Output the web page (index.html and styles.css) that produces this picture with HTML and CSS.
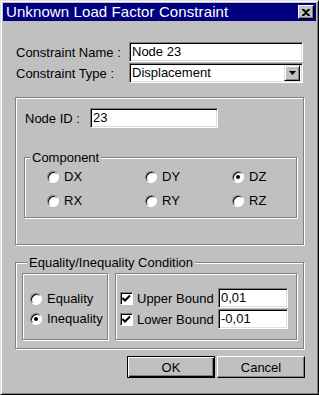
FILE: index.html
```html
<!DOCTYPE html>
<html>
<head>
<meta charset="utf-8">
<link rel="stylesheet" href="styles.css">
</head>
<body>
<div class="window">
  <div class="titlebar">
    <span class="title">Unknown Load Factor Constraint</span>
    <span class="close"><svg width="8" height="7" viewBox="0 0 8 7"><path d="M0 0h2l2 2 2-2h2v1L5 3.5 8 6v1H6L4 5 2 7H0V6l3-2.5L0 1z" fill="#000"/></svg></span>
  </div>
  <div class="content">
    <div class="row r1">
      <span class="label">Constraint Name :</span>
      <span class="input wide">Node 23</span>
    </div>
    <div class="row r2">
      <span class="label">Constraint Type :</span>
      <span class="input wide select">Displacement<span class="dd"><svg width="7" height="4" viewBox="0 0 7 4"><path d="M0 0h7L3.5 4z" fill="#000"/></svg></span></span>
    </div>

    <div class="group g1">
      <div class="row nodeid">
        <span class="label short">Node ID :</span>
        <span class="input nid">23</span>
      </div>
      <div class="group comp">
        <span class="legend">Component</span>
        <div class="grid">
          <span class="opt"><span class="radio"></span>DX</span>
          <span class="opt"><span class="radio"></span>DY</span>
          <span class="opt"><span class="radio on"></span>DZ</span>
          <span class="opt"><span class="radio"></span>RX</span>
          <span class="opt"><span class="radio"></span>RY</span>
          <span class="opt"><span class="radio"></span>RZ</span>
        </div>
      </div>
    </div>

    <div class="group g2">
      <span class="legend">Equality/Inequality Condition</span>
      <div class="boxes">
        <div class="box left">
          <span class="opt"><span class="radio"></span>Equality</span>
          <span class="opt"><span class="radio on"></span>Inequality</span>
        </div>
        <div class="box right">
          <div class="brow"><span class="check"><svg width="9" height="9" viewBox="0 0 9 9"><path d="M0.5 4l2.5 2.5L8 1.5" stroke="#000" stroke-width="2" fill="none"/></svg></span><span class="blabel">Upper Bound</span><span class="input bnd">0,01</span></div>
          <div class="brow"><span class="check"><svg width="9" height="9" viewBox="0 0 9 9"><path d="M0.5 4l2.5 2.5L8 1.5" stroke="#000" stroke-width="2" fill="none"/></svg></span><span class="blabel">Lower Bound</span><span class="input bnd">-0,01</span></div>
        </div>
      </div>
    </div>

    <div class="buttons">
      <span class="btn default">OK</span>
      <span class="btn">Cancel</span>
    </div>
  </div>
</div>
</body>
</html>
```
FILE: styles.css
```css
html, body { margin: 0; padding: 0; background: #c0c0c0; }
body { font-family: "Liberation Sans", Arial, sans-serif; font-size: 13px; color: #000; }
.window {
  box-sizing: border-box; width: 319px; height: 395px; background: #c0c0c0;
  border: 1px solid; border-color: #dfdfdf #000 #000 #dfdfdf;
  box-shadow: inset 1px 1px #fff, inset -1px -1px #808080;
  padding: 2px;
}
.titlebar {
  height: 18px; background: #000080; color: #fff; display: flex; align-items: center;
  justify-content: space-between; padding: 0 2px 0 3px;
}
.title { font-size: 15px; letter-spacing: 0.1px; line-height: 18px; }
.close {
  box-sizing: border-box; width: 16px; height: 14px; background: #c0c0c0;
  border: 1px solid; border-color: #fff #000 #000 #fff; box-shadow: inset -1px -1px #808080;
  display: flex; align-items: center; justify-content: center;
}
.content { padding: 21px 12px 0 12px; }
.row { display: flex; align-items: center; }
.r1, .r2 { padding-left: 1px; }
.r2 { margin-top: 1px; }
.label { width: 113px; }
.input {
  box-sizing: border-box; height: 20px; background: #fff;
  border: 1px solid; border-color: #808080 #fff #fff #808080;
  box-shadow: inset 1px 1px #000, inset -1px -1px #dfdfdf;
  padding: 0 2px; line-height: 18px; display: flex; align-items: center;
}
.wide { width: 174px; }
.select { justify-content: space-between; padding-right: 2px; }
.dd {
  box-sizing: border-box; width: 16px; height: 16px; background: #c0c0c0;
  border: 1px solid; border-color: #dfdfdf #000 #000 #dfdfdf;
  box-shadow: inset 1px 1px #fff, inset -1px -1px #808080;
  display: flex; align-items: center; justify-content: center;
}
.group {
  border: 1px solid #808080; box-shadow: 1px 1px 0 #fff, inset 1px 1px 0 #fff;
}
.legend { display: block; width: fit-content; background: #c0c0c0; padding: 0 2px; margin: -8px 0 0 5px; line-height: 15px; }
.g1 { margin-top: 14px; height: 148px; box-sizing: border-box; padding: 10px 6px 0 8px; }
.short { width: 65px; padding-left: 1px; }
.nid { width: 128px; }
.comp { margin-top: 29px; height: 61px; box-sizing: border-box; }
.grid { display: grid; grid-template-columns: 98px 87px 60px; row-gap: 9px; padding: 4px 0 0 22px; }
.opt { display: flex; align-items: center; gap: 5px; height: 15px; }
.radio {
  box-sizing: border-box; width: 12px; height: 12px; border-radius: 50%; background: #fff;
  border: 1px solid; border-color: #808080 #fff #fff #808080;
  box-shadow: inset 1px 1px #000; display: flex; align-items: center; justify-content: center;
}
.radio.on::after { content: ""; width: 4px; height: 4px; border-radius: 50%; background: #000; }
.g2 { margin-top: 17px; height: 87px; box-sizing: border-box; padding: 0 5px 0 6px; }
.boxes { display: flex; gap: 7px; margin-top: 3px; }
.box {
  border: 1px solid #808080; box-shadow: 1px 1px 0 #fff, inset 1px 1px 0 #fff;
  height: 67px; box-sizing: border-box;
}
.left { width: 86px; display: flex; flex-direction: column; gap: 5px; padding: 17px 0 0 7px; }
.right { width: 182px; display: flex; flex-direction: column; gap: 1px; padding: 14px 0 0 4px; }
.brow { display: flex; align-items: center; height: 20px; }
.check {
  box-sizing: border-box; width: 13px; height: 13px; background: #fff;
  border: 1px solid; border-color: #808080 #fff #fff #808080; box-shadow: inset 1px 1px #000;
  display: flex; align-items: center; justify-content: center;
}
.blabel { width: 81px; padding-left: 4px; }
.bnd { width: 70px; }
.buttons { display: flex; justify-content: flex-end; gap: 2px; margin: 7px -1px 0 0; }
.btn {
  box-sizing: border-box; width: 88px; height: 22px; display: flex; align-items: center; justify-content: center;
  border: 1px solid; border-color: #fff #000 #000 #fff; box-shadow: inset -1px -1px #808080;
}
.btn.default { border: 1px solid #000; box-shadow: inset 1px 1px #fff, inset -1px -1px #000, inset -2px -2px #808080; }
```
